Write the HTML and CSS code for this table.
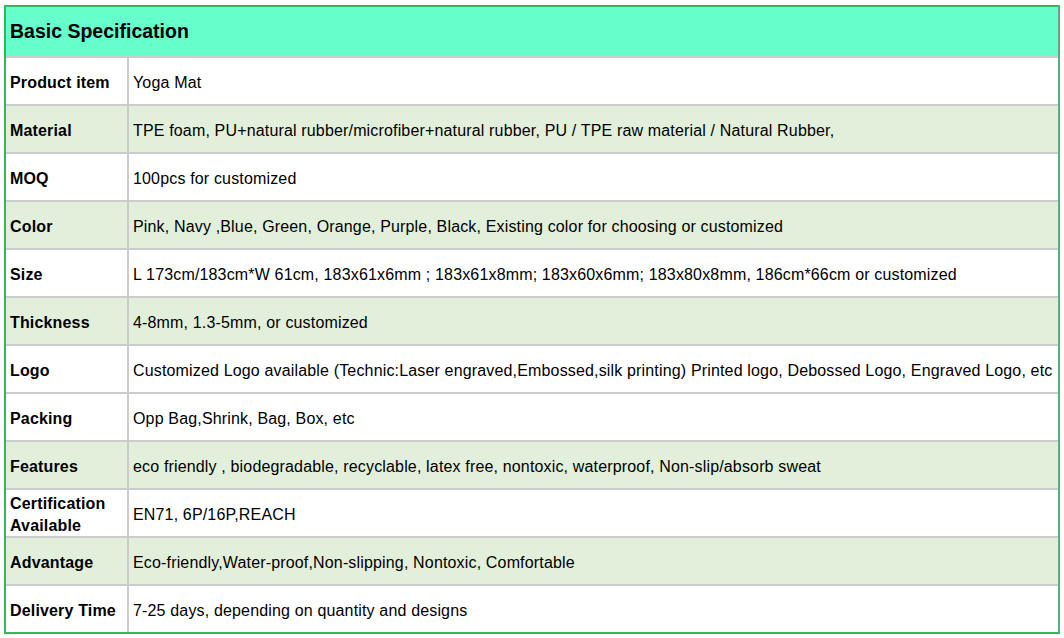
FILE: index.html
```html
<!DOCTYPE html>
<html>
<head>
<meta charset="utf-8">
<link rel="stylesheet" href="styles.css">
</head>
<body>
<div class="page">
  <div class="spec">
    <div class="head">Basic Specification</div>
    <div class="row"><div class="label">Product item</div><div class="value">Yoga Mat</div></div>
    <div class="row alt"><div class="label">Material</div><div class="value">TPE foam, PU+natural rubber/microfiber+natural rubber, PU / TPE raw material / Natural Rubber,</div></div>
    <div class="row"><div class="label">MOQ</div><div class="value">100pcs for customized</div></div>
    <div class="row alt"><div class="label">Color</div><div class="value">Pink, Navy ,Blue, Green, Orange, Purple, Black, Existing color for choosing or customized</div></div>
    <div class="row"><div class="label">Size</div><div class="value">L 173cm/183cm*W 61cm, 183x61x6mm ; 183x61x8mm; 183x60x6mm; 183x80x8mm, 186cm*66cm or customized</div></div>
    <div class="row alt"><div class="label">Thickness</div><div class="value">4-8mm, 1.3-5mm, or customized</div></div>
    <div class="row"><div class="label">Logo</div><div class="value">Customized Logo available (Technic:Laser engraved,Embossed,silk printing) Printed logo, Debossed Logo, Engraved Logo, etc</div></div>
    <div class="row"><div class="label">Packing</div><div class="value">Opp Bag,Shrink, Bag, Box, etc</div></div>
    <div class="row alt"><div class="label">Features</div><div class="value">eco friendly , biodegradable, recyclable, latex free, nontoxic, waterproof, Non-slip/absorb sweat</div></div>
    <div class="row"><div class="label">Certification Available</div><div class="value">EN71, 6P/16P,REACH</div></div>
    <div class="row alt"><div class="label">Advantage</div><div class="value">Eco-friendly,Water-proof,Non-slipping, Nontoxic, Comfortable</div></div>
    <div class="row"><div class="label">Delivery Time</div><div class="value">7-25 days, depending on quantity and designs</div></div>
  </div>
</div>
</body>
</html>
```
FILE: styles.css
```css
html, body {
  margin: 0;
  padding: 0;
  background: #ffffff;
}
.page {
  padding: 5px 0 0 4px;
}
.spec {
  width: 1052px;
  border: 2px solid #2dbb5e;
  border-right-color: #5cae7c;
  font-family: "Liberation Sans", Arial, sans-serif;
  color: #000;
}
.head {
  height: 49px;
  background: #66ffcc;
  font-weight: bold;
  font-size: 19.5px;
  display: flex;
  align-items: center;
  padding-left: 4px;
}
.row {
  display: flex;
  height: 46px;
  border-top: 2px solid #cccccc;
  background: #ffffff;
  font-size: 16px;
  letter-spacing: 0.16px;
}
.row.alt {
  background: #e2efda;
}
.label,
.value {
  box-sizing: border-box;
  height: 46px;
  padding-top: 4px;
  display: flex;
  align-items: center;
}
.label {
  width: 123px;
  flex: none;
  padding-left: 4px;
  border-right: 2px solid #cccccc;
  font-weight: bold;
  line-height: 22px;
}
.value {
  flex: 1;
  padding-left: 4px;
  white-space: nowrap;
  overflow: hidden;
}
```
